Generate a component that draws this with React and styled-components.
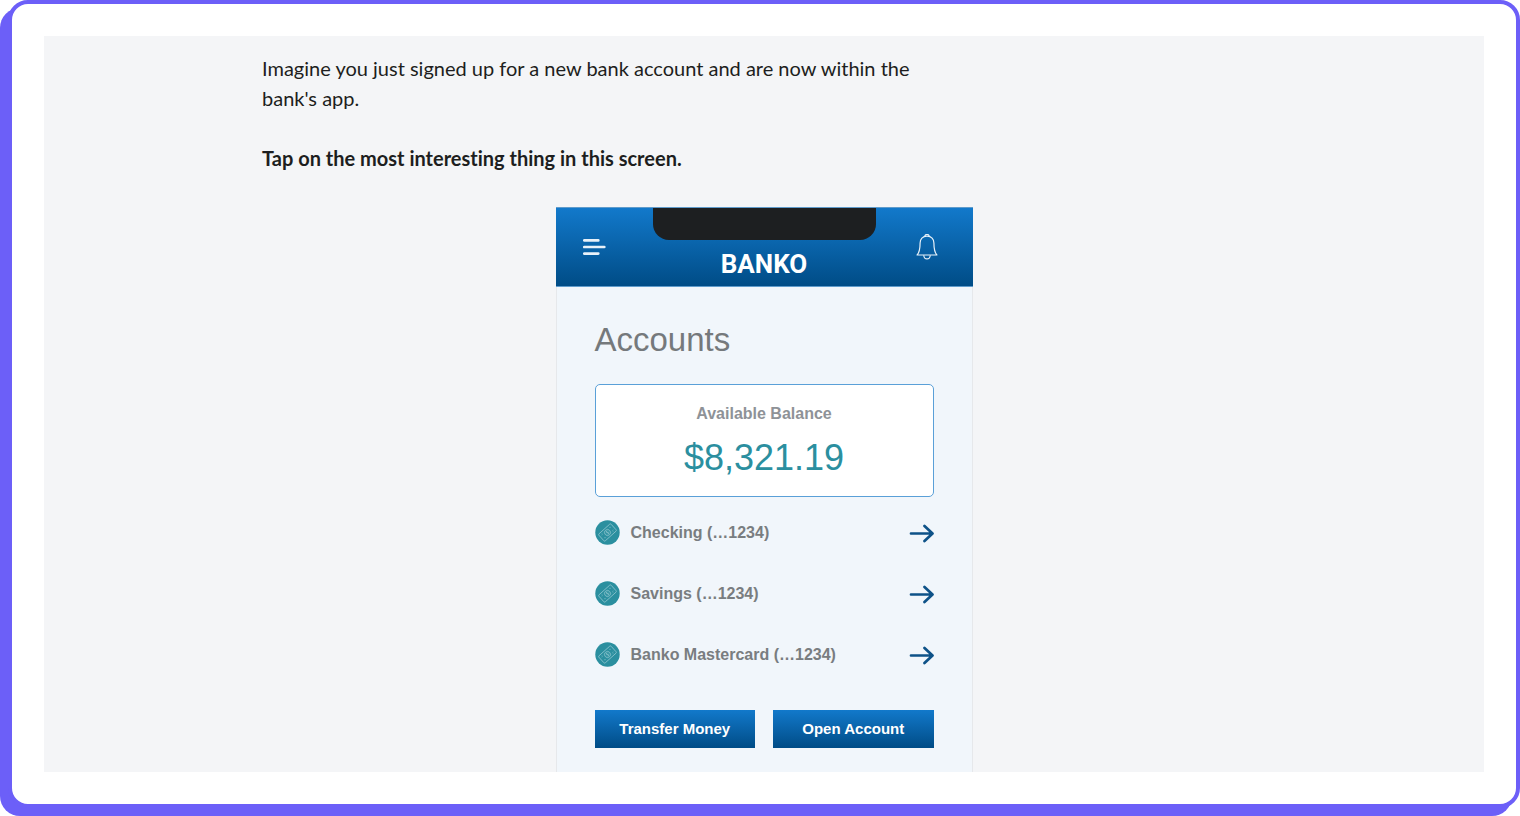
import styled, { createGlobalStyle } from 'styled-components';

const GlobalStyle = createGlobalStyle`
  * {
    box-sizing: border-box;
  }

  body {
    margin: 0;
    background: #ffffff;
    font-family: 'Liberation Sans', Arial, sans-serif;
  }
`;

const Frame = styled.div`
  margin: 0 0 8px 8px;
  padding: 32px;
  background: #ffffff;
  border: 4px solid #6c5ff8;
  border-radius: 20px;
  box-shadow: -8px 8px 0 #6c5ff8;
`;

const Panel = styled.main`
  padding: 17px 24px 0;
  background: #f4f5f7;
`;

const Content = styled.div`
  max-width: 1004px;
  margin: 0 auto;
`;

const Prompt = styled.div`
  max-width: 680px;
  margin-bottom: 34px;
  color: #1d1e20;
  font-family: Lato, sans-serif;
  font-size: 20px;
  font-variant-ligatures: none;
  line-height: 30px;
`;

const PromptText = styled.p`
  margin: 0 0 30px;
`;

const PromptTask = styled.p`
  margin: 0;
  font-weight: 700;
`;

const Phone = styled.section`
  max-width: 417px;
  margin: 0 auto;
  background: #f1f6fb;
  border: solid #e6e8eb;
  border-width: 0 1px;
`;

const PhoneHeader = styled.header`
  display: grid;
  grid-template-columns: 1fr 223px 1fr;
  height: 80px;
  margin: 0 -1px;
  background: linear-gradient(#1279cb, #004c86);
  border: solid #5f9bcb;
  border-width: 1px 0;
`;

const IconButton = styled.button`
  display: flex;
  align-items: center;
  justify-content: ${({ $align }) => $align};
  padding: 0 ${({ $inset }) => $inset}px;
  background: none;
  border: none;
  color: #e8f1f9;
  cursor: pointer;
`;

const HeaderCenter = styled.div`
  text-align: center;
`;

const Notch = styled.div`
  height: 32px;
  background: #1d1f21;
  border-radius: 0 0 16px 16px;
`;

const Brand = styled.div`
  margin-top: 8px;
  color: #ffffff;
  font-family: Roboto, sans-serif;
  font-size: 26px;
  font-weight: 700;
  line-height: 32px;
`;

const PhoneBody = styled.div`
  padding: 32px 38px 24px;
`;

const Title = styled.h1`
  margin: 0 0 23px;
  color: #75797c;
  font-size: 33px;
  font-weight: 400;
  line-height: 42px;
`;

const BalanceCard = styled.div`
  margin-bottom: 5px;
  padding: 17px 16px 14px;
  background: #ffffff;
  border: 1px solid #5aa0d8;
  border-radius: 5px;
  text-align: center;
`;

const BalanceLabel = styled.div`
  color: #8e9297;
  font-size: 16px;
  font-weight: 700;
  line-height: 24px;
`;

const BalanceAmount = styled.div`
  margin-top: 8px;
  color: #2b8f9f;
  font-size: 36px;
  line-height: 48px;
`;

const AccountList = styled.ul`
  margin: 0 0 25px;
  padding: 0;
  list-style: none;
`;

const AccountLink = styled.a`
  display: flex;
  align-items: center;
  gap: 11px;
  height: 61px;
  color: #797d80;
  font-size: 16px;
  font-weight: 700;
  text-decoration: none;
`;

const AccountName = styled.span`
  flex: 1;
`;

const Actions = styled.div`
  display: grid;
  grid-template-columns: 1fr 1fr;
  gap: 18px;
`;

const ActionButton = styled.button`
  height: 38px;
  padding: 0 0 1px;
  background: linear-gradient(#1279cb, #004c86);
  border: none;
  color: #ffffff;
  cursor: pointer;
  font-family: inherit;
  font-size: 15px;
  font-weight: 700;
`;

const MenuIcon = () => (
  <svg width='23' height='18' viewBox='0 0 23 18' fill='none' aria-hidden='true'>
    <path
      d='M1.3 2.4h14M1.3 9h20M1.3 15.600h14'
      stroke='currentColor'
      strokeWidth='2.700'
      strokeLinecap='round'
    />
  </svg>
);

const BellIcon = () => (
  <svg width='22' height='26' viewBox='0 0 22 26' fill='none' aria-hidden='true'>
    <g stroke='currentColor' strokeWidth='1.2' strokeLinejoin='round'>
      <path d='M8.8 2.6a2.2 2.2 0 0 1 4.4 0' />
      <path d='M11 2.2c-4.500 0-6.900 3-6.900 6.800 0 6.200-.5 9.200-3 12h19.800c-2.500-2.800-3-5.800-3-12 0-3.800-2.400-6.800-6.900-6.800z' />
      <path d='M7.700 21.200c.3 2.500 1.600 3.700 3.300 3.700s3-1.200 3.300-3.700' />
    </g>
  </svg>
);

const MoneyIcon = () => (
  <svg width='25' height='25' viewBox='0 0 25 25' fill='none' aria-hidden='true'>
    <circle cx='12.500' cy='12.500' r='12.200' fill='#2b8f9f' />
    <g transform='rotate(-42 12.500 12.500)' stroke='#83bfc9' strokeWidth='0.9'>
      <rect x='4.300' y='7.800' width='16.400' height='9.400' rx='1' />
      <path d='M6.300 10.800a1.500 1.500 0 0 0 1.500-1.500M18.700 10.800a1.500 1.500 0 0 1-1.500-1.500M6.300 14.200a1.500 1.500 0 0 1 1.500 1.500M18.700 14.200a1.500 1.500 0 0 0-1.500 1.500' strokeWidth='0.500' />
      <circle cx='12.500' cy='12.500' r='3' />
      <path d='M13.600 11.300c-.5-.5-2-.5-2 .4s2 .7 2 1.600-1.600.9-2.200.3M12.500 10.400v4.200' strokeWidth='0.700' />
    </g>
  </svg>
);

const ArrowIcon = () => (
  <svg width='25' height='20' viewBox='0 0 25 20' fill='none' aria-hidden='true'>
    <path
      d='M2 10.500h21M15.500 3l8 7.500-8 7.500'
      stroke='#0e5288'
      strokeWidth='2.700'
      strokeLinecap='round'
      strokeLinejoin='round'
    />
  </svg>
);

const accounts = ['Checking (…1234)', 'Savings (…1234)', 'Banko Mastercard (…1234)'];

const App = () => {
  return (
    <>
      <GlobalStyle />
      <Frame>
        <Panel>
          <Content>
            <Prompt>
              <PromptText>
                Imagine you just signed up for a new bank account and are now within the bank's app.
              </PromptText>
              <PromptTask>Tap on the most interesting thing in this screen.</PromptTask>
            </Prompt>

            <Phone>
              <PhoneHeader>
                <IconButton type='button' aria-label='Menu' $align='flex-start' $inset={27}>
                  <MenuIcon />
                </IconButton>
                <HeaderCenter>
                  <Notch />
                  <Brand>BANKO</Brand>
                </HeaderCenter>
                <IconButton type='button' aria-label='Notifications' $align='flex-end' $inset={35}>
                  <BellIcon />
                </IconButton>
              </PhoneHeader>

              <PhoneBody>
                <Title>Accounts</Title>
                <BalanceCard>
                  <BalanceLabel>Available Balance</BalanceLabel>
                  <BalanceAmount>$8,321.19</BalanceAmount>
                </BalanceCard>

                <AccountList>
                  {accounts.map((account) => (
                    <li key={account}>
                      <AccountLink href='#'>
                        <MoneyIcon />
                        <AccountName>{account}</AccountName>
                        <ArrowIcon />
                      </AccountLink>
                    </li>
                  ))}
                </AccountList>

                <Actions>
                  <ActionButton type='button'>Transfer Money</ActionButton>
                  <ActionButton type='button'>Open Account</ActionButton>
                </Actions>
              </PhoneBody>
            </Phone>
          </Content>
        </Panel>
      </Frame>
    </>
  );
};

export default App;
